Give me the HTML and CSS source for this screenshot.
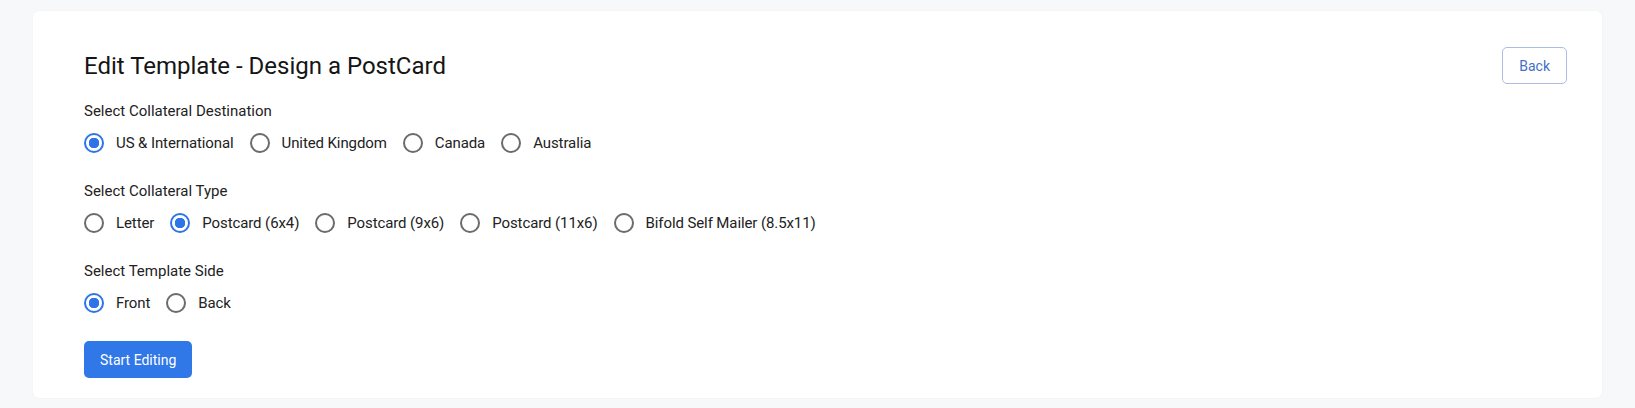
FILE: index.html
```html
<!DOCTYPE html>
<html lang="en">
<head>
    <meta charset="UTF-8">
    <meta name="viewport" content="width=device-width, initial-scale=1.0">
    <title>Edit Template</title>
    <link rel="stylesheet" href="styles.css">
</head>
<body>
    <div class="card">
        <div class="card-header">
            <h2 class="card-title">Edit Template - Design a PostCard</h2>
            <button class="back-button">Back</button>
        </div>

        <div class="field">
            <div class="field-label">Select Collateral Destination</div>
            <div class="radio-row">
                <label class="radio"><input type="radio" name="destination" checked><span>US &amp; International</span></label>
                <label class="radio"><input type="radio" name="destination"><span>United Kingdom</span></label>
                <label class="radio"><input type="radio" name="destination"><span>Canada</span></label>
                <label class="radio"><input type="radio" name="destination"><span>Australia</span></label>
            </div>
        </div>

        <div class="field">
            <div class="field-label">Select Collateral Type</div>
            <div class="radio-row">
                <label class="radio"><input type="radio" name="type"><span>Letter</span></label>
                <label class="radio"><input type="radio" name="type" checked><span>Postcard (6x4)</span></label>
                <label class="radio"><input type="radio" name="type"><span>Postcard (9x6)</span></label>
                <label class="radio"><input type="radio" name="type"><span>Postcard (11x6)</span></label>
                <label class="radio"><input type="radio" name="type"><span>Bifold Self Mailer (8.5x11)</span></label>
            </div>
        </div>

        <div class="field field-side">
            <div class="field-label">Select Template Side</div>
            <div class="radio-row">
                <label class="radio"><input type="radio" name="side" checked><span>Front</span></label>
                <label class="radio"><input type="radio" name="side"><span>Back</span></label>
            </div>
        </div>

        <button class="start-button">Start Editing</button>
    </div>
</body>
</html>
```

FILE: styles.css
```css
body {
    font-family: 'Roboto', 'Liberation Sans', sans-serif;
    background-color: #f7f8fa;
    color: #1f1f1f;
    margin: 0;
    padding: 11px 33px 10px;
}

.card {
    background-color: #fff;
    border-radius: 6px;
    box-shadow: 0 0 2px rgba(0, 0, 0, 0.06);
    padding: 36px 35px 20px 51px;
}

.card-header {
    display: flex;
    justify-content: space-between;
    align-items: center;
    height: 37px;
}

.card-title {
    margin: 0;
    font-size: 24px;
    font-weight: 400;
    color: #151515;
}

.back-button {
    height: 37px;
    padding: 0 16px;
    border: 1px solid #a9bde7;
    border-radius: 5px;
    background-color: #fff;
    color: #4570c8;
    font-family: inherit;
    font-size: 14px;
    cursor: pointer;
}

.field {
    margin-top: 17px;
}

.field + .field {
    margin-top: 28px;
}

.field-side {
    margin-top: 30px;
}

.field-label {
    font-size: 15px;
    line-height: 20px;
    color: #222;
}

.radio-row {
    display: flex;
    align-items: center;
    margin-top: 12px;
}

.radio {
    display: flex;
    align-items: center;
    margin-right: 16px;
    font-size: 15px;
    line-height: 20px;
    letter-spacing: -0.1px;
    color: #222;
    cursor: pointer;
}

.radio input {
    appearance: none;
    width: 20px;
    height: 20px;
    margin: 0 12px 0 0;
    border: 2px solid #6b6b6b;
    border-radius: 50%;
    box-sizing: border-box;
    cursor: pointer;
}

.radio input:checked {
    border-color: #2f74e6;
    background: radial-gradient(circle, #2f74e6 0 5px, #fff 5.5px);
}

.start-button {
    display: block;
    margin-top: 28px;
    height: 37px;
    padding: 0 16px;
    border: none;
    border-radius: 5px;
    background-color: #3077e8;
    color: #fff;
    font-family: inherit;
    font-size: 14px;
    cursor: pointer;
}
```
